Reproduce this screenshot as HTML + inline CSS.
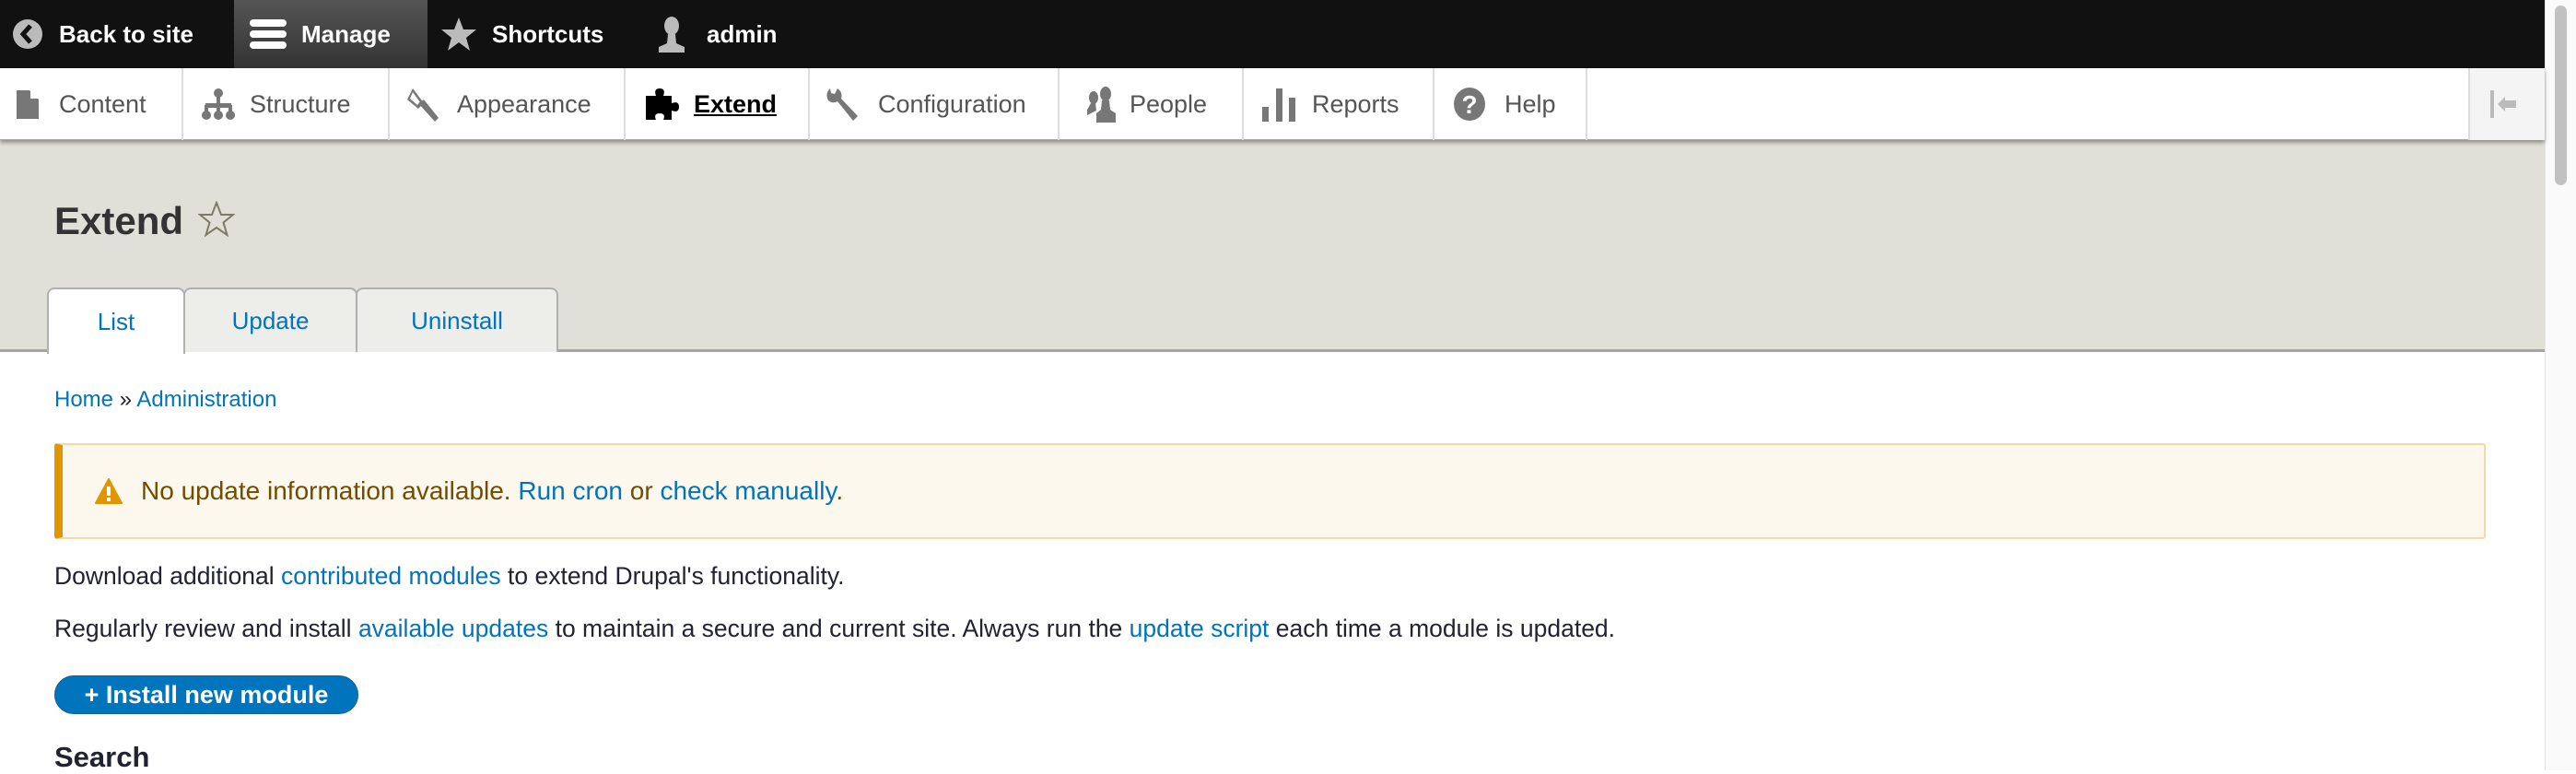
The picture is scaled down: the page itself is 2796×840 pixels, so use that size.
<!DOCTYPE html>
<html><head><meta charset="utf-8"><style>
*{box-sizing:border-box;margin:0;padding:0}
body{width:2796px;height:836px;overflow:hidden;background:#fff;font-family:"Liberation Sans",sans-serif;position:relative}
.bar{position:absolute;left:0;top:0;width:2762px;height:74px;background:#111;color:#fff;font-weight:bold;font-size:26px}
.bar .it{position:absolute;top:0;height:74px;display:flex;align-items:center}
.tray{position:absolute;left:0;top:74px;width:2762px;height:78px;background:#fff;box-shadow:0 3px 4px rgba(0,0,0,.35);border-bottom:1px solid #aaa;z-index:2}
.tray .t{position:absolute;top:0;height:78px;display:flex;align-items:center;border-right:2px solid #ddd;color:#555;font-size:27px}
.hdr{position:absolute;left:0;top:152px;width:2762px;height:230px;background:#e0e0d8;border-bottom:3px solid #a6a6a6}
h1{position:absolute;left:59px;top:216px;font-size:42px;color:#333;font-weight:bold}
.tab{position:absolute;top:312px;height:70px;background:#ededea;border:2px solid #b0b0b0;border-bottom:none;border-radius:8px 8px 0 0;color:#0074bd;font-size:26px;display:flex;align-items:center;justify-content:center}
a{color:#0074bd;text-decoration:none}
.p{position:absolute;left:59px;font-size:26.5px;color:#222330}
.warn{position:absolute;left:59px;top:481px;width:2639px;height:104px;background:#fdf8ed;border:2px solid #f4dba6;border-left:9px solid #e09600;border-radius:3px;display:flex;align-items:center;padding-left:35px;font-size:28px;color:#734c00}
.btn{position:absolute;left:59px;top:733px;width:330px;height:42px;background:#0074bd;border:1px solid #1e5c90;border-radius:21px;color:#fff;font-weight:bold;font-size:27px;display:flex;align-items:center;justify-content:center}
.sb{position:absolute;left:2762px;top:0;width:34px;height:836px;background:#fafafa;border-left:1px solid #e5e5e5}
.sb div{position:absolute;left:10px;top:6px;width:13px;height:195px;background:#c1c1c1;border-radius:7px}
</style></head><body>
<div class="bar">
 <div class="it" style="left:13px"><svg width="34" height="34" viewBox="0 0 34 34"><circle cx="17" cy="17" r="16" fill="#bbb"/><path d="M20 8 L12 17 L20 26" stroke="#111" stroke-width="5" fill="none"/></svg><span style="margin-left:17px">Back to site</span></div>
 <div style="position:absolute;left:254px;top:0;width:210px;height:74px;background:linear-gradient(#555,#333)"></div>
 <div class="it" style="left:270px"><svg width="42" height="36" viewBox="0 0 42 36"><rect x="1" y="2" width="40" height="8" rx="4" fill="#fff"/><rect x="1" y="14" width="40" height="8" rx="4" fill="#fff"/><rect x="1" y="26" width="40" height="8" rx="4" fill="#fff"/></svg><span style="margin-left:15px">Manage</span></div>
 <div class="it" style="left:478px"><svg width="40" height="38" viewBox="0 0 40 38"><path d="M20 1 L25 14 L39 14 L28 23 L32 37 L20 28 L8 37 L12 23 L1 14 L15 14Z" fill="#bbb"/></svg><span style="margin-left:16px">Shortcuts</span></div>
 <div class="it" style="left:714px"><svg width="30" height="40" viewBox="0 0 30 40"><ellipse cx="15" cy="11" rx="8" ry="10" fill="#bbb"/><path d="M11 20 L19 20 L20 30 L29 34 L29 40 L1 40 L1 34 L10 30Z" fill="#bbb"/></svg><span style="margin-left:23px">admin</span></div>
</div>
<div class="tray">
 <div class="t" style="left:0;width:199px;padding-left:16px"><svg width="28" height="34"><path d="M2 2 L16 2 L26 12 L26 33 L2 33Z" fill="#777"/><path d="M17 2 L26 11 L17 11Z" fill="#fff"/></svg><span style="margin-left:20px">Content</span></div>
 <div class="t" style="left:199px;width:224px;padding-left:18px"><svg width="40" height="36"><circle cx="20" cy="6" r="5" fill="#777"/><rect x="18" y="8" width="4" height="12" fill="#777"/><rect x="6" y="17" width="28" height="5" fill="#777"/><rect x="5" y="19" width="4" height="10" fill="#777"/><rect x="31" y="19" width="4" height="10" fill="#777"/><rect x="18" y="19" width="4" height="10" fill="#777"/><circle cx="7" cy="30" r="5" fill="#777"/><circle cx="20" cy="30" r="5" fill="#777"/><circle cx="33" cy="30" r="5" fill="#777"/></svg><span style="margin-left:14px">Structure</span></div>
 <div class="t" style="left:423px;width:256px;padding-left:17px"><svg width="38" height="38"><path d="M8 2 L2 14 L14 24 L20 18Z" fill="#777"/><path d="M8 6 L5 13 L13 20 L16 17Z" fill="#fff"/><path d="M14 18 L20 14 L36 34 L32 38Z" fill="#777"/></svg><span style="margin-left:18px">Appearance</span></div>
 <div class="t" style="left:679px;width:200px;padding-left:20px;color:#000;font-weight:bold"><svg width="40" height="38"><path d="M2 10 L13 10 Q10 2 17 2 Q24 2 21 10 L30 10 L30 18 Q38 15 38 22 Q38 29 30 26 L30 36 L21 36 Q24 29 17 29 Q10 29 13 36 L2 36Z" fill="#000"/></svg><span style="margin-left:14px;text-decoration:underline">Extend</span></div>
 <div class="t" style="left:879px;width:271px;padding-left:14px"><svg width="40" height="40"><path d="M8 3 Q2 9 6 16 Q11 20 16 17 L33 38 L38 33 L20 14 Q22 7 16 3 L13 9 L9 8Z" fill="#777"/></svg><span style="margin-left:20px">Configuration</span></div>
 <div class="t" style="left:1150px;width:200px;padding-left:28px"><svg width="34" height="40"><ellipse cx="22" cy="9" rx="6" ry="8" fill="#777"/><path d="M18 16 L26 16 L27 26 L33 30 L33 40 L12 40 L12 30 L17 26Z" fill="#777"/><ellipse cx="9" cy="13" rx="5" ry="7" fill="#777"/><path d="M6 19 L11 19 L12 27 L2 32 L2 26Z" fill="#777"/></svg><span style="margin-left:14px">People</span></div>
 <div class="t" style="left:1350px;width:207px;padding-left:20px"><svg width="38" height="38"><rect x="0" y="22" width="7" height="16" fill="#777"/><rect x="15" y="2" width="7" height="36" fill="#777"/><rect x="29" y="12" width="7" height="26" fill="#777"/></svg><span style="margin-left:16px">Reports</span></div>
 <div class="t" style="left:1557px;width:166px;padding-left:20px"><svg width="36" height="38"><ellipse cx="18" cy="19" rx="17" ry="18" fill="#777"/><text x="18" y="29" font-size="28" font-weight="bold" text-anchor="middle" fill="#fff" font-family="Liberation Sans">?</text></svg><span style="margin-left:20px">Help</span></div>
 <div style="position:absolute;left:2679px;top:0;width:83px;height:78px;background:#f4f4f4;border-left:2px solid #ddd"><svg style="position:absolute;left:20px;top:22px" width="40" height="34"><rect x="2" y="2" width="4" height="30" fill="#bbb"/><path d="M10 17 L18 9 L18 13 L30 13 L30 21 L18 21 L18 25Z" fill="#bbb"/></svg></div>
</div>
<div class="hdr"></div>
<h1>Extend <svg width="40" height="40" viewBox="0 0 40 40" style="vertical-align:-4px;margin-left:4px"><path d="M20 2 L25 15 L38 15 L27.5 23.5 L31.5 37 L20 29 L8.5 37 L12.5 23.5 L2 15 L15 15Z" fill="none" stroke="#7e7a68" stroke-width="2"/></svg></h1>
<div class="tab" style="left:51px;width:150px;background:#fff;height:72px;z-index:3">List</div>
<div class="tab" style="left:199px;width:189px">Update</div>
<div class="tab" style="left:386px;width:220px">Uninstall</div>
<div class="p" style="top:420px;font-size:24px"><a>Home</a> » <a>Administration</a></div>
<div class="warn"><svg width="30" height="28" viewBox="0 0 30 28"><path d="M15 1 L29 27 L1 27Z" fill="#e09600" stroke="#e09600" stroke-linejoin="round" stroke-width="2"/><rect x="13" y="9" width="4" height="10" fill="#fff"/><rect x="13" y="21" width="4" height="4" fill="#fff"/></svg><span style="margin-left:20px">No update information available. <a>Run cron</a> or <a>check manually</a>.</span></div>
<div class="p" style="top:610px">Download additional <a>contributed modules</a> to extend Drupal's functionality.</div>
<div class="p" style="top:667px">Regularly review and install <a>available updates</a> to maintain a secure and current site. Always run the <a>update script</a> each time a module is updated.</div>
<div class="btn">+ Install new module</div>
<div class="p" style="top:804px;font-size:31px;font-weight:bold">Search</div>
<div class="sb"><div></div></div>
</body></html>
